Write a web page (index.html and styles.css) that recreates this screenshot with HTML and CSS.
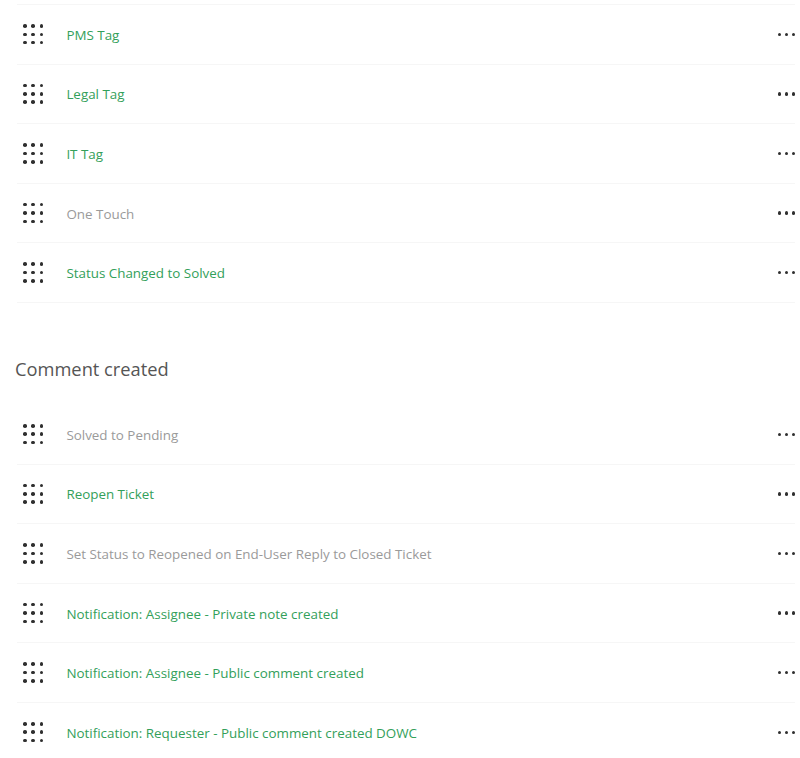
FILE: index.html
```html
<!DOCTYPE html>
<html>
<head>
<meta charset="utf-8">
<link rel="stylesheet" href="styles.css">
</head>
<body>
<div class="page">
  <ul class="list list-first">
    <li class="row"><span class="grip"><i></i><i></i><i></i><i></i><i></i><i></i><i></i><i></i><i></i></span><span class="name active">PMS Tag</span><span class="more"><i></i><i></i><i></i></span></li>
    <li class="row"><span class="grip"><i></i><i></i><i></i><i></i><i></i><i></i><i></i><i></i><i></i></span><span class="name active">Legal Tag</span><span class="more"><i></i><i></i><i></i></span></li>
    <li class="row"><span class="grip"><i></i><i></i><i></i><i></i><i></i><i></i><i></i><i></i><i></i></span><span class="name active">IT Tag</span><span class="more"><i></i><i></i><i></i></span></li>
    <li class="row"><span class="grip"><i></i><i></i><i></i><i></i><i></i><i></i><i></i><i></i><i></i></span><span class="name inactive">One Touch</span><span class="more"><i></i><i></i><i></i></span></li>
    <li class="row"><span class="grip"><i></i><i></i><i></i><i></i><i></i><i></i><i></i><i></i><i></i></span><span class="name active">Status Changed to Solved</span><span class="more"><i></i><i></i><i></i></span></li>
  </ul>
  <h2 class="section-title">Comment created</h2>
  <ul class="list">
    <li class="row"><span class="grip"><i></i><i></i><i></i><i></i><i></i><i></i><i></i><i></i><i></i></span><span class="name inactive">Solved to Pending</span><span class="more"><i></i><i></i><i></i></span></li>
    <li class="row"><span class="grip"><i></i><i></i><i></i><i></i><i></i><i></i><i></i><i></i><i></i></span><span class="name active">Reopen Ticket</span><span class="more"><i></i><i></i><i></i></span></li>
    <li class="row"><span class="grip"><i></i><i></i><i></i><i></i><i></i><i></i><i></i><i></i><i></i></span><span class="name inactive">Set Status to Reopened on End-User Reply to Closed Ticket</span><span class="more"><i></i><i></i><i></i></span></li>
    <li class="row"><span class="grip"><i></i><i></i><i></i><i></i><i></i><i></i><i></i><i></i><i></i></span><span class="name active">Notification: Assignee - Private note created</span><span class="more"><i></i><i></i><i></i></span></li>
    <li class="row"><span class="grip"><i></i><i></i><i></i><i></i><i></i><i></i><i></i><i></i><i></i></span><span class="name active">Notification: Assignee - Public comment created</span><span class="more"><i></i><i></i><i></i></span></li>
    <li class="row"><span class="grip"><i></i><i></i><i></i><i></i><i></i><i></i><i></i><i></i><i></i></span><span class="name active">Notification: Requester - Public comment created DOWC</span><span class="more"><i></i><i></i><i></i></span></li>
  </ul>
</div>
</body>
</html>
```

FILE: styles.css
```css
html, body {
  margin: 0;
  padding: 0;
  background: #ffffff;
}
.page {
  font-family: "Open Sans", "Noto Sans", sans-serif;
  padding: 4px 5px 0 17px;
  overflow: hidden;
  height: 758px;
  box-sizing: border-box;
}
.list {
  list-style: none;
  margin: 0;
  padding: 0;
}
.list-first {
  border-top: 1px solid #f6f6f6;
}
.row {
  display: flex;
  align-items: center;
  height: 59.6px;
  box-sizing: border-box;
  border-bottom: 1px solid #f6f6f6;
  padding-left: 6px;
}
.grip {
  display: grid;
  grid-template-columns: repeat(3, 3.6px);
  grid-template-rows: repeat(3, 3.6px);
  gap: 4.8px;
  margin-right: 23px;
  flex: none;
}
.grip i {
  display: block;
  width: 3.6px;
  height: 3.6px;
  border-radius: 50%;
  background: #2f2f2f;
}
.name {
  font-size: 13.4px;
  flex: 1;
  padding-top: 1px;
}
.active {
  color: #33a05a;
}
.inactive {
  color: #9a9a9a;
}
.more {
  display: flex;
  gap: 3.6px;
  flex: none;
}
.more i {
  display: block;
  width: 3.4px;
  height: 3.4px;
  border-radius: 50%;
  background: #2f2f2f;
}
.section-title {
  margin: 54px 0 24px -2px;
  font-size: 18.3px;
  line-height: 24px;
  font-weight: 400;
  color: #555555;
}
```
